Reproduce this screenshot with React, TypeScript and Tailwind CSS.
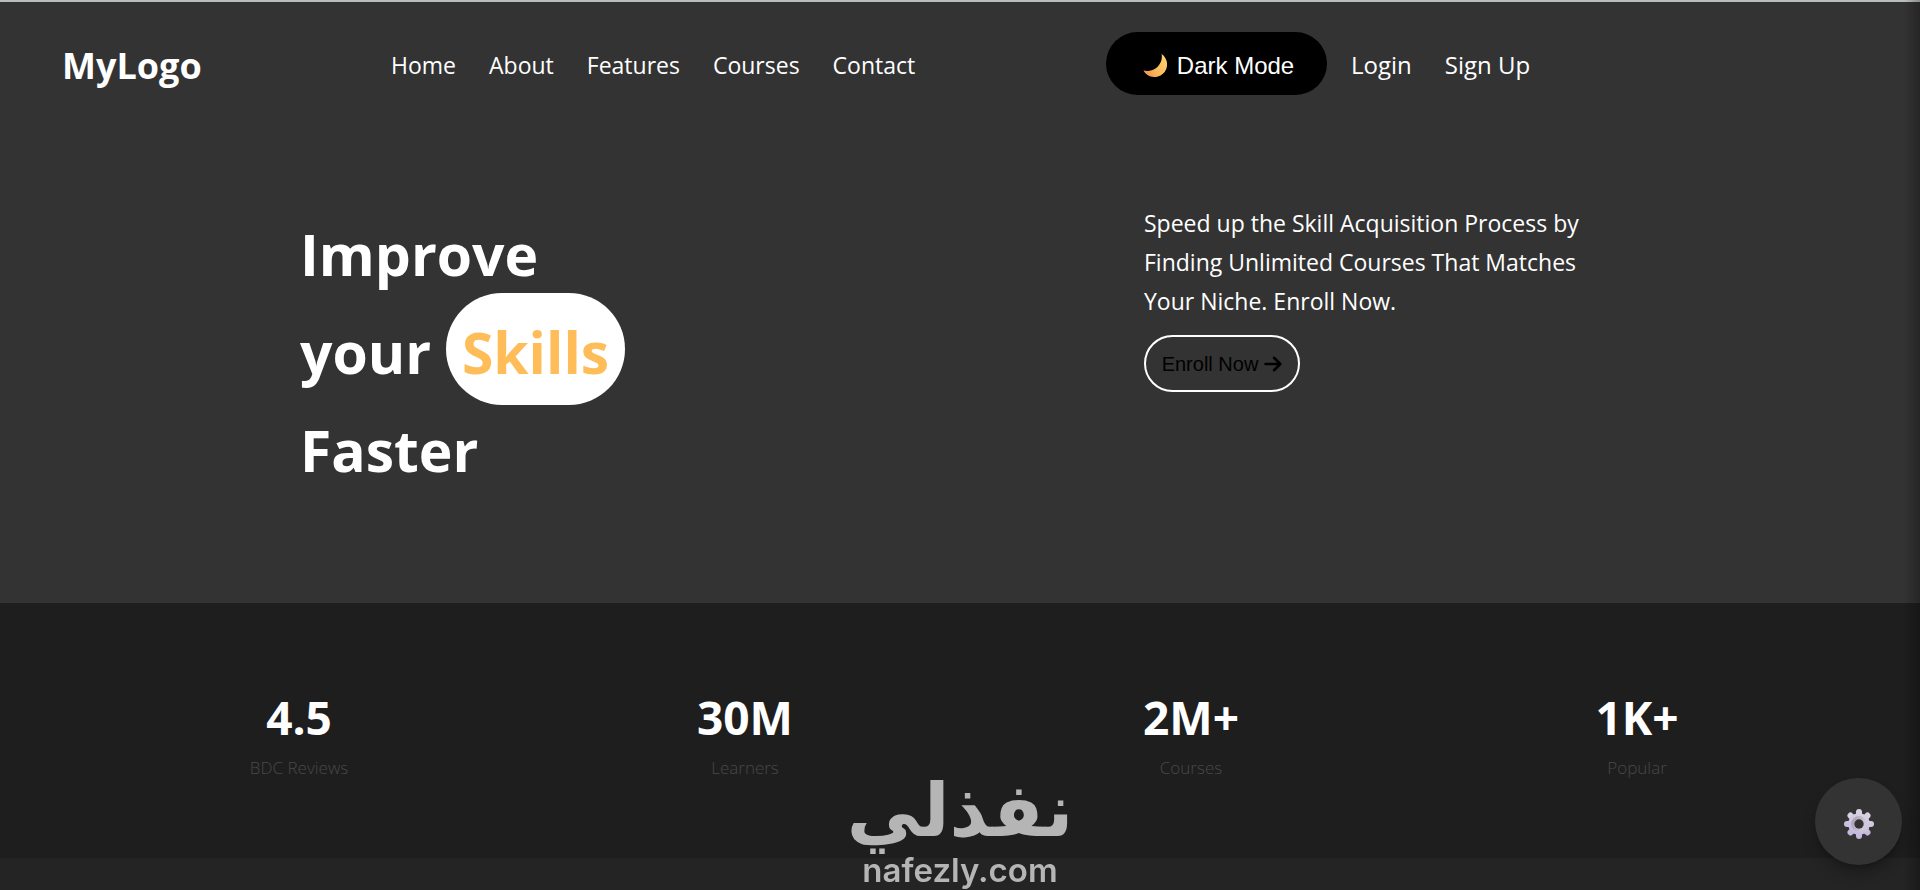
import { useState } from "react";

const navLinks = ["Home", "About", "Features", "Courses", "Contact"];

const stats = [
  { value: "4.5", label: "BDC Reviews" },
  { value: "30M", label: "Learners" },
  { value: "2M+", label: "Courses" },
  { value: "1K+", label: "Popular" },
];

const MoonIcon = () => (
  <svg width="24" height="24" viewBox="0 0 24 24" aria-hidden="true">
    <defs>
      <linearGradient id="moon" x1="0" y1="1" x2="1" y2="0.3">
        <stop offset="0" stopColor="#f08a4b" />
        <stop offset="0.5" stopColor="#fcb95b" />
        <stop offset="1" stopColor="#fdd06c" />
      </linearGradient>
    </defs>
    <path d="M18.6 0 A12.6 12.6 0 1 1 0.4 16.4 C5 17.6 10.5 16.6 14.4 13 C18.4 9.2 19.4 4.6 18.6 0Z" fill="url(#moon)" />
  </svg>
);

const ArrowIcon = () => (
  <svg width="18" height="16" viewBox="0 0 18 16" fill="none" stroke="currentColor" strokeWidth="2.6" strokeLinecap="round" strokeLinejoin="round" aria-hidden="true">
    <path d="M1.5 8H16M10 1.8l6.3 6.2L10 14.2" />
  </svg>
);

const GearIcon = () => (
  <svg width="30" height="30" viewBox="0 0 30 30" aria-hidden="true">
    <defs>
      <linearGradient id="gear" gradientUnits="userSpaceOnUse" x1="20" y1="0" x2="10" y2="30">
        <stop offset="0" stopColor="#dcd6e4" />
        <stop offset="1" stopColor="#c0b4dc" />
      </linearGradient>
      <linearGradient id="gear-ring" x1="0" y1="0" x2="1" y2="0.4">
        <stop offset="0" stopColor="#a9a2b2" />
        <stop offset="1" stopColor="#cfc8da" />
      </linearGradient>
    </defs>
    <g fill="url(#gear)">
      <rect x="12" y="0" width="6" height="30" rx="3" />
      <rect x="0" y="12" width="30" height="6" rx="3" />
      <rect x="12" y="0" width="6" height="30" rx="3" transform="rotate(45 15 15)" />
      <rect x="12" y="0" width="6" height="30" rx="3" transform="rotate(-45 15 15)" />
      <circle cx="15" cy="15" r="10.8" />
    </g>
    <circle cx="15" cy="15" r="6.2" fill="none" stroke="url(#gear-ring)" strokeWidth="3.4" />
    <circle cx="15" cy="15" r="4.7" fill="#333333" />
  </svg>
);

const Header = () => {
  const [isDark, setIsDark] = useState(true);

  return (
    <header className="grid grid-cols-[391fr_715fr_814fr] items-center pt-[30px]">
      <a href="#" className="pt-1 pl-[62px] text-4xl font-bold">MyLogo</a>

      <nav className="flex gap-[33px] pt-1 text-[23px]">
        {navLinks.map((link) => (
          <a key={link} href={`#${link.toLowerCase()}`}>{link}</a>
        ))}
      </nav>

      <div className="flex items-center text-2xl">
        <button
          onClick={() => setIsDark(!isDark)}
          aria-pressed={isDark}
          className="flex h-[63px] w-[221px] items-center justify-center gap-2.5 rounded-full bg-black pt-1 pl-1 font-['Liberation_Sans',sans-serif]"
        >
          <MoonIcon />
          Dark Mode
        </button>
        <a href="#login" className="ml-6 pt-0.5">Login</a>
        <a href="#signup" className="ml-[33px] pt-0.5">Sign Up</a>
      </div>
    </header>
  );
};

const Hero = () => (
  <section className="grid grid-cols-[1144fr_776fr]">
    <h1 className="pt-[110px] pl-[300px] text-[57px] leading-[98px] font-bold">
      Improve
      <br />
      your{" "}
      <span className="rounded-[56px] bg-white px-4 pt-5 pb-3.5 text-[#ffbd59]">Skills</span>
      <br />
      Faster
    </h1>

    <div className="pt-[109px]">
      <p className="max-w-[460px] text-[23px] leading-[39px]">
        Speed up the Skill Acquisition Process by Finding Unlimited Courses That Matches Your Niche. Enroll Now.
      </p>
      <button className="mt-3.5 flex h-[57px] w-[156px] items-center justify-center gap-1.5 rounded-full border-2 border-white font-['Liberation_Sans',sans-serif] text-xl text-black">
        Enroll Now
        <ArrowIcon />
      </button>
    </div>
  </section>
);

const Stats = () => (
  <section className="grid h-[255px] grid-cols-4 bg-[#1e1e1e] pt-[82px] pr-15 pl-19 text-center">
    {stats.map((stat) => (
      <div key={stat.label}>
        <p className="text-[46px] leading-[64px] font-bold">{stat.value}</p>
        <p className="mt-1 text-[17px] leading-[30px] font-light text-[#484848]">{stat.label}</p>
      </div>
    ))}
  </section>
);

const Watermark = () => (
  <div className="pointer-events-none fixed bottom-0 left-1/2 flex -translate-x-1/2 flex-col items-center text-[#b5b5b5]">
    <span lang="ar" dir="rtl" className="font-['DejaVu_Sans',sans-serif] text-[74px] leading-[80px] font-bold">نفذلي</span>
    <span className="font-['Inter',sans-serif] text-[33px] leading-10 font-semibold">nafezly.com</span>
  </div>
);

const App = () => (
  <div className="flex min-h-screen flex-col bg-[#242424] font-['Open_Sans','Noto_Sans',sans-serif] text-white">
    <div className="h-[603px] border-t-2 border-[#b9bebe] bg-[#333333]">
      <Header />
      <Hero />
    </div>
    <Stats />
    <div className="pointer-events-none fixed inset-y-0 right-0 w-4 bg-gradient-to-r from-transparent to-black/25" />
    <Watermark />
    <button
      aria-label="Settings"
      className="fixed right-[18px] bottom-[25px] flex size-[87px] items-center justify-center rounded-full bg-[#333333] pt-1 shadow-lg shadow-black/30"
    >
      <GearIcon />
    </button>
  </div>
);

export default App;
